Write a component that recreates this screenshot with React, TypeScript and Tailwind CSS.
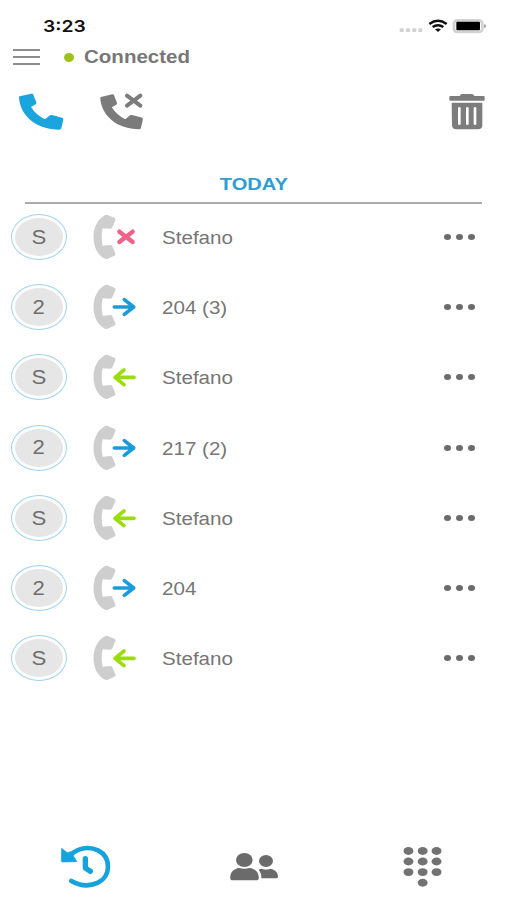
import React from 'react';

type CallKind = 'missed' | 'outgoing' | 'incoming';

const calls: { name: string; initial: string; kind: CallKind }[] = [
  { name: 'Stefano', initial: 'S', kind: 'missed' },
  { name: '204 (3)', initial: '2', kind: 'outgoing' },
  { name: 'Stefano', initial: 'S', kind: 'incoming' },
  { name: '217 (2)', initial: '2', kind: 'outgoing' },
  { name: 'Stefano', initial: 'S', kind: 'incoming' },
  { name: '204', initial: '2', kind: 'outgoing' },
  { name: 'Stefano', initial: 'S', kind: 'incoming' },
];

const handset =
  'M5 10 L40 2 Q44 1 46 5 L55 28 Q56 32 53 34 L39 42 Q54 66 81 79 L94 68 Q97 65 102 66 L132 74 Q137 76 136 80 L130 106 Q129 110 124 110 C56 110 8 70 3 16 Q2 11 5 10Z';

const StatusBar: React.FC = () => (
  <div className="flex h-[42px] items-start justify-between pl-[43px] pr-[20px] pt-[16px]">
    <span className="origin-left scale-x-[1.17] font-['Inter','Liberation_Sans',sans-serif] text-[16.5px] font-semibold leading-5 text-[#111111]">
      3:23
    </span>
    <svg viewBox="58 50 264 54" className="mt-px h-[18px] w-[88px]">
      <g fill="#d2d2d2">
        <rect x="60" y="84" width="12" height="11" rx="2" />
        <rect x="79" y="84" width="12" height="11" rx="2" />
        <rect x="98" y="84" width="12" height="11" rx="2" />
        <rect x="116" y="84" width="12" height="11" rx="2" />
      </g>
      <g fill="none" stroke="#111" strokeWidth="7.5">
        <path d="M149 71 Q175 52 201 71" />
        <path d="M159 80 Q175 69 191 80" />
      </g>
      <path d="M166 87 Q175 82 184 87 L175 95Z" fill="#111" />
      <rect x="223" y="60" width="85" height="35" rx="10" fill="#fff" stroke="#d2d2d2" strokeWidth="8" />
      <rect x="230" y="64" width="71" height="26" rx="3" fill="#000" />
      <path d="M313 72 Q320 73 320 77 Q320 81 313 83Z" fill="#aaa" />
    </svg>
  </div>
);

const Trash: React.FC = () => (
  <svg viewBox="56 38 108 111" className="h-[37px] w-[36px]">
    <path
      d="M60 47 H88 L92 42 Q93 41 96 41 H125 Q128 41 129 43 L132 47 H160 Q163 47 163 50 V58 Q163 61 160 61 H60 Q57 61 57 58 V50 Q57 47 60 47Z"
      fill="#7d7d7d"
    />
    <path d="M64 67 H156 V135 Q156 147 143 147 H78 Q65 147 65 135Z" fill="#7d7d7d" />
    <path d="M87 84 V130 M111 84 V130 M134 84 V130" stroke="#fff" strokeWidth="8" strokeLinecap="round" />
  </svg>
);

const CallIcon: React.FC<{ kind: CallKind }> = ({ kind }) => (
  <svg viewBox="276 24 135 144" className="h-[48px] w-[45px]">
    <path
      d="M312 32 Q318 28 323 30 L343 38 Q348 41 346 46 L337 67 Q335 71 331 71 L308 70 Q302 96 308 122 L331 120 Q335 120 337 124 L346 145 Q348 150 343 152 L323 161 Q318 164 312 160 C270 136 270 56 312 32Z"
      fill="#cecece"
    />
    {kind === 'missed' && (
      <path d="M358 80 L398 111 M398 80 L358 111" stroke="#ec6488" strokeWidth="13" strokeLinecap="round" />
    )}
    {kind === 'outgoing' && (
      <path
        d="M343 96 H400 M373 74 L401 96 L373 118"
        fill="none" stroke="#1b9bdb" strokeWidth="11" strokeLinecap="round" strokeLinejoin="round"
      />
    )}
    {kind === 'incoming' && (
      <path
        d="M402 97 H346 M372 75 L345 97 L372 119"
        fill="none" stroke="#9bdc0c" strokeWidth="11" strokeLinecap="round" strokeLinejoin="round"
      />
    )}
  </svg>
);

const Dots: React.FC = () => (
  <div className="flex gap-[5px]">
    <span className="h-[6px] w-[7px] rounded-[50%] bg-[#6b6b6b]" />
    <span className="h-[6px] w-[7px] rounded-[50%] bg-[#6b6b6b]" />
    <span className="h-[6px] w-[7px] rounded-[50%] bg-[#6b6b6b]" />
  </div>
);

const TabBar: React.FC = () => (
  <nav className="flex items-center pl-[60px]">
    <svg viewBox="60 30 153 129" className="h-[43px] w-[51px]">
      <path
        d="M92 60 C116 37 149 34 174 46 C214 66 214 124 174 143 C147 156 117 151 94 138"
        fill="none" stroke="#16a2dc" strokeWidth="14" strokeLinecap="round"
      />
      <path
        d="M65 40 Q72 46 82 53 L92 50 L111 80 L68 81 Q64 81 64 77Z"
        fill="#16a2dc" stroke="#16a2dc" strokeWidth="2" strokeLinejoin="round"
      />
      <path d="M136 71 V99 L151 109" fill="none" stroke="#16a2dc" strokeWidth="16" strokeLinecap="round" strokeLinejoin="round" />
    </svg>
    <svg viewBox="42 48 150 93" className="ml-[118px] h-[31px] w-[50px]" fill="#6b6b6b">
      <ellipse cx="88" cy="75" rx="25" ry="21" />
      <path d="M46 131 C44 111 58 101 72 99 Q88 104 104 99 C122 101 133 113 131 131 Q130 136 125 136 H51 Q47 136 46 131Z" />
      <ellipse cx="153" cy="78" rx="21" ry="18" />
      <path d="M131 104 Q136 101 141 101 Q153 106 166 101 C182 104 190 115 189 126 Q188 130 184 130 H139 Q140 115 131 104Z" />
    </svg>
    <svg viewBox="54 32 117 124" className="ml-[124px] h-[41px] w-[39px]" fill="#727272">
      {[47, 79, 111].map((y) =>
        [70, 113, 155].map((x) => <ellipse key={`${x}-${y}`} cx={x} cy={y} rx="15" ry="12" />)
      )}
      <ellipse cx="113" cy="143" rx="15" ry="12" />
    </svg>
  </nav>
);

const App: React.FC = () => {
  return (
    <div className="flex h-[900px] w-[507px] flex-col overflow-hidden bg-white font-['Liberation_Sans',Arial,sans-serif]">
      <StatusBar />

      <header className="flex h-[30px] items-center pl-[13px]">
        <div className="flex w-[27px] flex-col gap-[5px]">
          <span className="h-[2px] bg-[#8c8c8c]" />
          <span className="h-[2px] bg-[#8c8c8c]" />
          <span className="h-[2px] bg-[#8c8c8c]" />
        </div>
        <span className="ml-[24px] h-[9px] w-[10px] rounded-[50%] bg-[#9dc21c]" />
        <span className="ml-[10px] origin-left scale-x-[1.14] text-[18px] font-bold leading-5 text-[#777777]">
          Connected
        </span>
      </header>

      <div className="flex h-[78px] items-center pl-[18px] pr-[22px]">
        <svg viewBox="0 0 138 114" className="mt-px h-[38px] w-[46px]">
          <path d={handset} fill="#1ba5de" />
        </svg>
        <svg viewBox="0 0 138 114" className="ml-[35px] mt-px h-[38px] w-[46px]">
          <path d={handset} fill="#7b7b7b" transform="translate(1 2) scale(.96 .97)" />
          <path d="M84 8 L124 38 M124 8 L84 38" stroke="#7b7b7b" strokeWidth="12" strokeLinecap="round" />
        </svg>
        <div className="ml-auto">
          <Trash />
        </div>
      </div>

      <div className="mx-[25px] flex h-[54px] items-end justify-center border-b-2 border-[#aaaaaa] pb-[7px]">
        <h2 className="scale-x-[1.18] text-[17px] font-bold leading-5 text-[#2d9dd3]">TODAY</h2>
      </div>

      <ul className="-mt-[2px]">
        {calls.map((call, i) => (
          <li key={i} className="flex h-[70.2px] items-center pl-[11px] pr-[32px]">
            <div className="h-[46px] w-[56px] rounded-[50%] border border-[#9fd3ef] p-[3px]">
              <div className="flex h-full items-center justify-center rounded-[50%] bg-[#e6e6e6]">
                <span className="scale-x-[1.08] text-[20.5px] leading-none text-[#6e6e6e]">{call.initial}</span>
              </div>
            </div>
            <div className="ml-[25px]">
              <CallIcon kind={call.kind} />
            </div>
            <span className="ml-[25px] mt-[2px] origin-left scale-x-[1.17] text-[17.6px] leading-5 text-[#767676]">
              {call.name}
            </span>
            <div className="ml-auto">
              <Dots />
            </div>
          </li>
        ))}
      </ul>

      <div className="mb-[12px] mt-auto">
        <TabBar />
      </div>
    </div>
  );
};

export default App;
